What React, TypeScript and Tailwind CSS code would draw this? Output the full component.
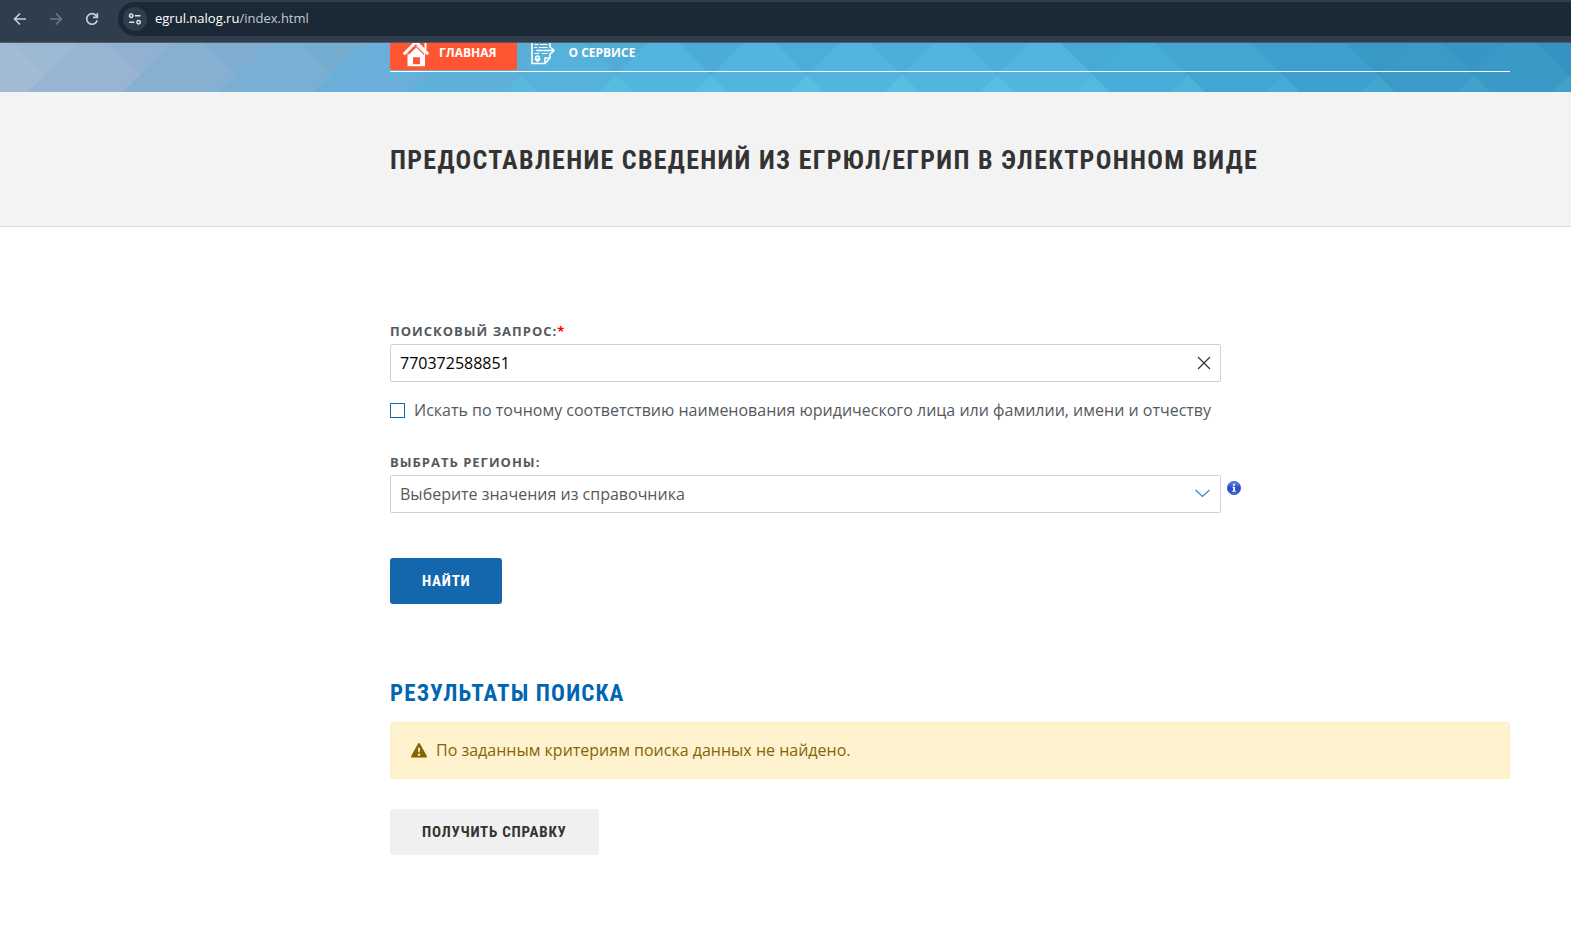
import { useState } from "react";

const displayFont = "font-['Roboto_Condensed','Open_Sans_Condensed',Roboto,sans-serif] font-bold tracking-wider";

// left part of the banner is cut along "/" edges, right part along "\" edges
const risingBands = [
  [45, "#98b4d2"],
  [140, "#86b0d2"],
  [235, "#78afd3"],
  [331, "#6aaeda"],
  [426, "#5db0d8"],
  [521, "#56b2db"],
  [616, "#51b5df"],
] as const;

const fallingBands = [
  [1093, "#46add8"],
  [1188, "#42a6d3"],
  [1283, "#3da0cf"],
  [1378, "#3a9bc9"],
  [1474, "#3999c7"],
  [1569, "#3894c4"],
] as const;

// tile meeting points: position, shade above, light below
const tiles = [
  [45, 0.03, 0],
  [140, 0.05, 0],
  [235, 0.06, 0],
  [331, 0.04, 0],
  [426, 0.03, 0.06],
  [521, 0.05, 0.12],
  [616, 0.1, 0.16],
  [711, 0.16, 0.2],
  [807, 0.13, 0.22],
  [902, 0.12, 0.24],
  [997, 0.12, 0.2],
  [1093, 0.04, 0.1],
  [1188, 0, 0.14],
  [1283, 0.03, 0.1],
  [1378, 0.07, 0.1],
  [1474, 0.1, 0.12],
  [1569, 0.05, 0.12],
];

function BackIcon() {
  return (
    <svg width="16" height="16" viewBox="0 0 16 16" fill="none" stroke="currentColor" strokeWidth="1.6">
      <path d="M14 8H3M8 2.5 2.5 8 8 13.5" />
    </svg>
  );
}

function ForwardIcon() {
  return (
    <svg width="16" height="16" viewBox="0 0 16 16" fill="none" stroke="currentColor" strokeWidth="1.6">
      <path d="M2 8h11M8 2.5 13.5 8 8 13.5" />
    </svg>
  );
}

function ReloadIcon() {
  return (
    <svg width="16" height="16" viewBox="0 0 16 16" fill="none" stroke="currentColor" strokeWidth="1.6">
      <path d="M13.2 9.2A5.3 5.3 0 1 1 12 4.4L13.4 6" />
      <path d="M13.4 2v4.4H9" />
    </svg>
  );
}

function SiteIcon() {
  return (
    <svg width="14" height="14" viewBox="0 0 14 14" fill="none" stroke="currentColor" strokeWidth="1.5">
      <circle cx="3.2" cy="3.8" r="1.7" />
      <path d="M6.8 3.8h5.7M1.2 10.2h5.2" />
      <circle cx="10.6" cy="10.2" r="1.7" />
    </svg>
  );
}

function HomeIcon() {
  return (
    <svg width="28" height="28" viewBox="0 0 28 28" fill="none" stroke="#fff">
      <path d="M1.8 15.200 14 3l12.200 12.200" strokeWidth="3" />
      <path d="M19.500 2.500h4v8" strokeWidth="2" />
      <path d="M6.500 14.500v11.700h15.500V14.500L14.200 7" strokeWidth="2" />
      <path d="M6.500 14.500 14.200 7l7.800 7.500v2.500H6.500z" fill="#ff5533" stroke="none" />
      <path d="M6 16.500 14.200 8.500l8.300 8v9.700h-4.500v-8h-7v8H6z" fill="#fff" stroke="none" />
    </svg>
  );
}

function DocumentIcon() {
  return (
    <svg width="28" height="28" viewBox="0 0 28 28" fill="none" stroke="#fff" strokeWidth="1.6">
      <path d="M21 9V1H3v23.500h13l5-5.500v-5" />
      <path d="M16 24.500V19h5" />
      <path d="M5.500 5.500h4M11 5.500h7.500M5.500 8.500h3M10 8.500h8.500M13 14.500h5.500M5.500 14.500h5" strokeWidth="1" />
      <path d="M7 11.500h18M22 8.500l3 3-3 3" />
      <circle cx="8.500" cy="18.800" r="1.800" />
      <path d="M5.800 19.800 8.500 22.500l2.700-2.700" strokeWidth="1.300" />
    </svg>
  );
}

function Banner() {
  return (
    <svg className="absolute inset-0 h-full w-full" viewBox="0 0 1571 49" preserveAspectRatio="none" aria-hidden="true">
      <rect width="1571" height="49" fill="#a2bad4" />
      {risingBands.map(([x, fill]) => (
        <path key={x} d={`M${x + 32} 0H1571v49H${x - 17}z`} fill={fill} />
      ))}
      {fallingBands.map(([x, fill]) => (
        <path key={x} d={`M${x - 32} 0H1571v49H${x + 17}z`} fill={fill} />
      ))}
      {tiles.map(([x, shade, light]) => (
        <g key={x}>
          <path d={`M${x - 32} 0h64L${x} 32z`} fill="#2a7fbd" opacity={shade} />
          <path d={`M${x} 32l17 17h-34z`} fill="#7adfee" opacity={light} />
        </g>
      ))}
    </svg>
  );
}

export default function App() {
  const [query, setQuery] = useState("770372588851");

  return (
    <div className="min-h-screen bg-white font-['Open_Sans',sans-serif] text-base text-[#55595c]">
      <div className="flex h-[43px] items-start border-b border-[#555a5f] bg-[#303d4c] pt-[2px] text-[#c3d0dc]">
        <div className="flex h-[34px] items-center gap-5 pl-3">
          <button type="button" aria-label="Назад"><BackIcon /></button>
          <button type="button" aria-label="Вперёд" className="text-[#6f7a85]"><ForwardIcon /></button>
          <button type="button" aria-label="Обновить"><ReloadIcon /></button>
        </div>
        <div className="ml-[18px] flex h-[34px] flex-1 items-center gap-2 rounded-l-full bg-[#1b2835] pl-[5px]">
          <button type="button" aria-label="Сведения о сайте" className="flex size-6 items-center justify-center rounded-full bg-[#303d4c] text-[#dfe6ec]">
            <SiteIcon />
          </button>
          <span className="text-[13px] text-white">
            egrul.nalog.ru<span className="text-[#c3cad1]">/index.html</span>
          </span>
        </div>
      </div>

      <header className="relative h-[49px] overflow-hidden">
        <Banner />
        <nav className="relative mr-[61px] ml-[390px] flex h-[29px] items-start border-b border-white text-[12px] font-bold text-white">
          <a href="#" className="flex h-[27px] items-center gap-[9px] rounded-b-[2px] bg-[#ff5533] pr-[21px] pl-3">
            <span className="-mt-2"><HomeIcon /></span>
            <span className="-mt-2">ГЛАВНАЯ</span>
          </a>
          <a href="#" className="flex h-[27px] items-center gap-[11px] pl-3">
            <span className="-mt-2"><DocumentIcon /></span>
            <span className="-mt-2">О СЕРВИСЕ</span>
          </a>
        </nav>
      </header>

      <div className="border-b border-[#dcdcdc] bg-[#f3f3f3] pt-[49px] pr-[61px] pb-[47px] pl-[390px]">
        <h1 className={`${displayFont} text-[26px] leading-[38px] whitespace-nowrap text-[#333]`}>
          ПРЕДОСТАВЛЕНИЕ СВЕДЕНИЙ ИЗ ЕГРЮЛ/ЕГРИП В ЭЛЕКТРОННОМ ВИДЕ
        </h1>
      </div>

      <main className="mr-[61px] ml-[390px] pt-[95px]">
        <form onSubmit={(e) => e.preventDefault()}>
          <label htmlFor="query" className="block h-[22px] text-[13px] leading-[18px] font-bold tracking-[1px]">
            ПОИСКОВЫЙ ЗАПРОС:<span className="text-[#ff0000]">*</span>
          </label>
          <div className="relative max-w-[831px]">
            <input
              id="query"
              value={query}
              onChange={(e) => setQuery(e.target.value)}
              className="block h-[38px] w-full rounded-[2px] border border-[#ced0da] px-[9px] text-black"
            />
            <button type="button" aria-label="Очистить" onClick={() => setQuery("")} className="absolute top-3 right-[10px]">
              <svg width="14" height="14" viewBox="0 0 14 14" stroke="#333" strokeWidth="1.2">
                <path d="M1 1l12 12M13 1 1 13" />
              </svg>
            </button>
          </div>

          <label className="mt-4 flex h-6 items-center gap-[9px] whitespace-nowrap">
            <input type="checkbox" className="size-[15px] appearance-none border border-[#1467ac] checked:bg-[#1467ac]" />
            Искать по точному соответствию наименования юридического лица или фамилии, имени и отчеству
          </label>

          <label htmlFor="region" className="mt-[31px] block h-[22px] text-[13px] leading-[18px] font-bold tracking-[1px]">
            ВЫБРАТЬ РЕГИОНЫ:
          </label>
          <div className="flex gap-[6px]">
            <div className="relative w-full max-w-[831px]">
              <select id="region" className="block h-[38px] w-full appearance-none rounded-[2px] border border-[#ced0da] bg-white px-[9px]">
                <option>Выберите значения из справочника</option>
              </select>
              <svg className="pointer-events-none absolute top-[14px] right-[11px]" width="15" height="9" viewBox="0 0 15 9" fill="none" stroke="#3c83bd" strokeWidth="1.2">
                <path d="M.5 1l7 6.500 7-6.500" />
              </svg>
            </div>
            <button type="button" aria-label="Справка" className="mt-[6px] size-[14px]">
              <svg width="14" height="14" viewBox="0 0 14 14">
                <defs>
                  <linearGradient id="info" x2="0" y2="1">
                    <stop offset="0" stopColor="#6a8fe6" />
                    <stop offset="0.5" stopColor="#2549c4" />
                    <stop offset="1" stopColor="#3f6ae6" />
                  </linearGradient>
                </defs>
                <circle cx="7" cy="7" r="6.600" fill="url(#info)" stroke="#3352b4" strokeWidth="0.800" />
                <circle cx="7" cy="3.800" r="1.100" fill="#fff" />
                <path d="M5.500 5.800H8v4h.8v1H5.300v-1h.9v-3h-.7z" fill="#fff" />
              </svg>
            </button>
          </div>

          <button type="submit" className={`${displayFont} mt-[45px] block h-[46px] rounded-[3px] bg-[#1467ac] px-8 text-[15px] text-white`}>
            НАЙТИ
          </button>
        </form>

        <section className="mt-[72px]">
          <h2 className={`${displayFont} text-[23px] leading-9 text-[#0066b3]`}>РЕЗУЛЬТАТЫ ПОИСКА</h2>
          <div className="mt-[10px] flex items-center gap-[9px] rounded-[3px] border border-[#ffeeba] bg-[#fff2cf] px-5 py-4 leading-[23px] text-[#856404]">
            <svg width="16" height="15" viewBox="0 0 16 15" fill="currentColor">
              <path fillRule="evenodd" d="M8 0q.6 0 .9.5l6.900 12.500q.4 1.500-.9 1.600H1.100Q-.2 14.500.2 13L7.100.5Q7.400 0 8 0zM7 4.800l.3 4.500h1.400L9 4.800zM8 10.500a1.200 1.200 0 1 0 .01 0z" />
            </svg>
            По заданным критериям поиска данных не найдено.
          </div>
          <button type="button" className={`${displayFont} mt-[30px] block h-[46px] rounded-[3px] bg-[#f0f0f0] px-8 text-[15px] text-[#333]`}>
            ПОЛУЧИТЬ СПРАВКУ
          </button>
        </section>
      </main>
    </div>
  );
}
